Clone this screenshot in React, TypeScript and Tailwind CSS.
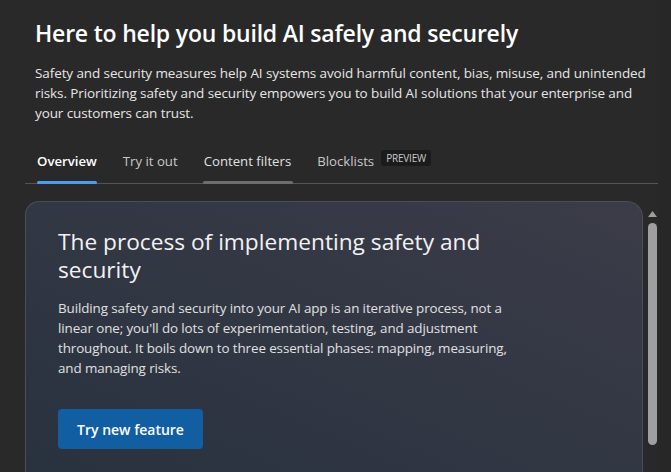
import React from "react";

export default function App() {
  const font = { fontFamily: '"Open Sans", "Noto Sans", sans-serif' };
  return (
    <div className="w-[671px] h-[472px] overflow-hidden bg-[#292929] text-white flex" style={font}>
      <div className="flex flex-col w-[658px] pl-[25px]">
        <div className="pl-[10px] pt-[17px]">
          <h1 className="text-[23px] leading-[32px] font-semibold text-[#ffffff] tracking-[-0.2px]">
            Here to help you build AI safely and securely
          </h1>
          <p className="mt-[14px] text-[13.5px] leading-[20px] text-[#e6e6e6] w-[612px] tracking-[-0.1px]">
            Safety and security measures help AI systems avoid harmful content, bias, misuse, and unintended risks. Prioritizing safety and security empowers you to build AI solutions that your enterprise and your customers can trust.
          </p>
        </div>
        <div className="mt-[18px] flex items-end gap-[26px] pl-[12px] border-b border-[#555555] h-[43px]">
          <div className="relative pt-[10px] pb-[12px] text-[13.2px] leading-[20px] font-semibold text-white">
            Overview
            <div className="absolute left-0 right-0 bottom-[-1px] h-[3px] rounded-[2px] bg-[#479ef5]" />
          </div>
          <div className="relative pt-[10px] pb-[12px] text-[13.2px] leading-[20px] text-[#c8c8c8]">Try it out</div>
          <div className="relative pt-[10px] pb-[12px] text-[13.2px] leading-[20px] text-[#e0e0e0]">
            Content filters
            <div className="absolute left-[-1px] right-[-2px] bottom-[-1px] h-[3px] rounded-[2px] bg-[#6e6e6e]" />
          </div>
          <div className="relative pt-[10px] pb-[12px] text-[13.2px] leading-[20px] text-[#c8c8c8] flex items-start gap-[7px]">
            <span>Blocklists</span>
            <span className="mt-[-1px] h-[16px] px-[5px] rounded-[3px] bg-[#1b1b1b] text-[10px] leading-[16px] text-[#c8c8c8] tracking-[-0.2px]">
              PREVIEW
            </span>
          </div>
        </div>
        <div className="flex mt-[17px] flex-1 min-h-0">
          <div className="w-[618px] flex-none rounded-tl-[14px] rounded-tr-[16px] border border-b-0 border-[#4b4e57] bg-gradient-to-tr from-[#29323f] to-[#3b3c48] pl-[32px] pr-[20px] pt-[26px]">
            <h2 className="text-[22.7px] leading-[28px] font-normal text-[#f2f2f2] w-[460px]">
              The process of implementing safety and security
            </h2>
            <p className="mt-[14px] text-[13.4px] leading-[20px] text-[#e0e0e0] w-[470px] tracking-[-0.1px]">
              Building safety and security into your AI app is an iterative process, not a linear one; you'll do lots of experimentation, testing, and adjustment throughout. It boils down to three essential phases: mapping, measuring, and managing risks.
            </p>
            <button className="mt-[31px] w-[145px] h-[40px] rounded-[4px] bg-[#115ea3] text-[14px] font-semibold text-white">
              Try new feature
            </button>
          </div>
          <div className="w-[15px] flex flex-col items-center pt-[10px]">
            <svg width="9" height="6" viewBox="0 0 9 6" className="ml-[3px]">
              <path d="M4.5 0 L9 6 L0 6 Z" fill="#9e9e9e" />
            </svg>
            <div className="mt-[6px] ml-[3px] w-[9px] h-[222px] rounded-full bg-[#9f9f9f]" />
          </div>
        </div>
      </div>
      <div className="flex-1 bg-[#272727]" />
    </div>
  );
}
